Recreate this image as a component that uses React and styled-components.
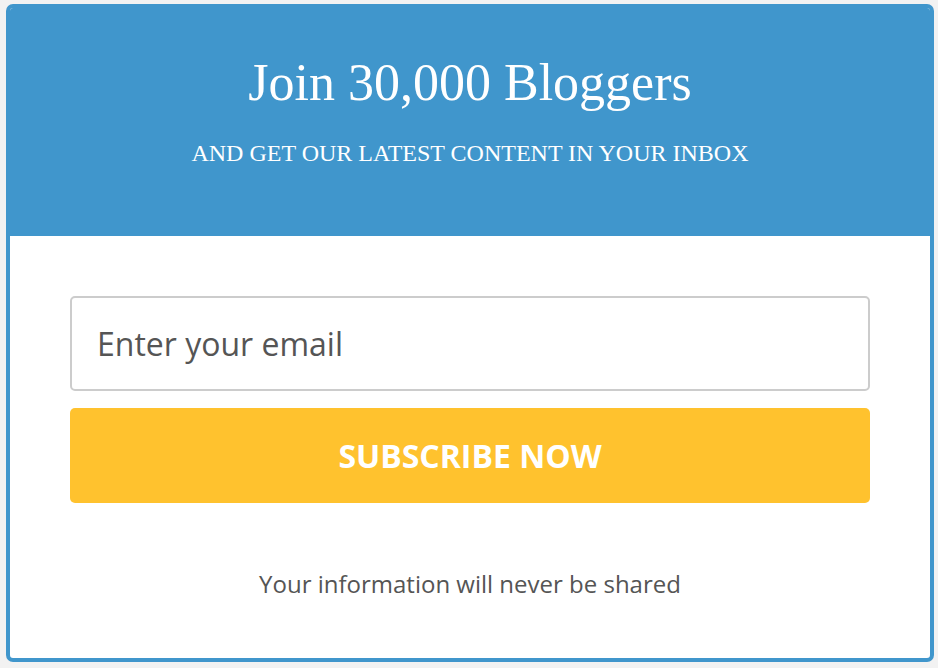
import React from 'react'
import styled, { createGlobalStyle } from 'styled-components'

// Page base
const GlobalStyle = createGlobalStyle`
  html, body {
    margin: 0;
    padding: 0;
    background-color: #f2f2f2;
  }
  body {
    padding: 4px 4px 6px 6px;
    box-sizing: border-box;
    width: 938px;
    height: 668px;
  }
`

// Card container CSS
const Card = styled.div`
  width: 928px;
  height: 658px;
  box-sizing: border-box;
  border: 4px solid #4096cc;
  border-radius: 7px;
  background-color: #ffffff;
  overflow: hidden;
  display: flex;
  flex-flow: column;
`

const Header = styled.div`
  height: 229px;
  margin: -1px -1px 0;
  background-color: #4096cc;
  color: #ffffff;
  font-family: 'Liberation Serif', 'Times New Roman', serif;
  text-align: center;
  display: flex;
  flex-flow: column;
  align-items: center;
  padding-top: 46px;
  box-sizing: border-box;
  h1 {
    margin: 0;
    font-size: 52px;
    font-weight: normal;
    line-height: 60px;
  }
  p {
    margin: 26px 0 0;
    font-size: 24px;
    line-height: 28px;
    text-transform: uppercase;
  }
`

const Body = styled.div`
  flex: 1;
  display: flex;
  flex-flow: column;
  align-items: center;
  padding-top: 60px;
  font-family: 'Open Sans', 'Liberation Sans', sans-serif;
`

const EmailInput = styled.input`
  width: 800px;
  height: 95px;
  box-sizing: border-box;
  border: 2px solid #cccccc;
  border-radius: 5px;
  padding: 0 25px;
  font-family: inherit;
  font-size: 32px;
  color: #555555;
  outline: none;
  &::placeholder {
    color: #555555;
  }
`

const SubscribeButton = styled.button`
  width: 800px;
  height: 95px;
  margin-top: 17px;
  border: none;
  border-radius: 5px;
  background-color: #ffc22e;
  color: #ffffff;
  font-family: inherit;
  font-size: 32px;
  font-weight: 700;
  text-transform: uppercase;
  cursor: pointer;
`

const Note = styled.div`
  margin-top: 64px;
  font-size: 24px;
  color: #555555;
`

const App = () => {
  return (
    <>
      <GlobalStyle />
      <Card>
        <Header>
          <h1>Join 30,000 Bloggers</h1>
          <p>And get our latest content in your inbox</p>
        </Header>
        <Body>
          <EmailInput type='email' placeholder='Enter your email' />
          <SubscribeButton>Subscribe now</SubscribeButton>
          <Note>Your information will never be shared</Note>
        </Body>
      </Card>
    </>
  )
}

export default App
